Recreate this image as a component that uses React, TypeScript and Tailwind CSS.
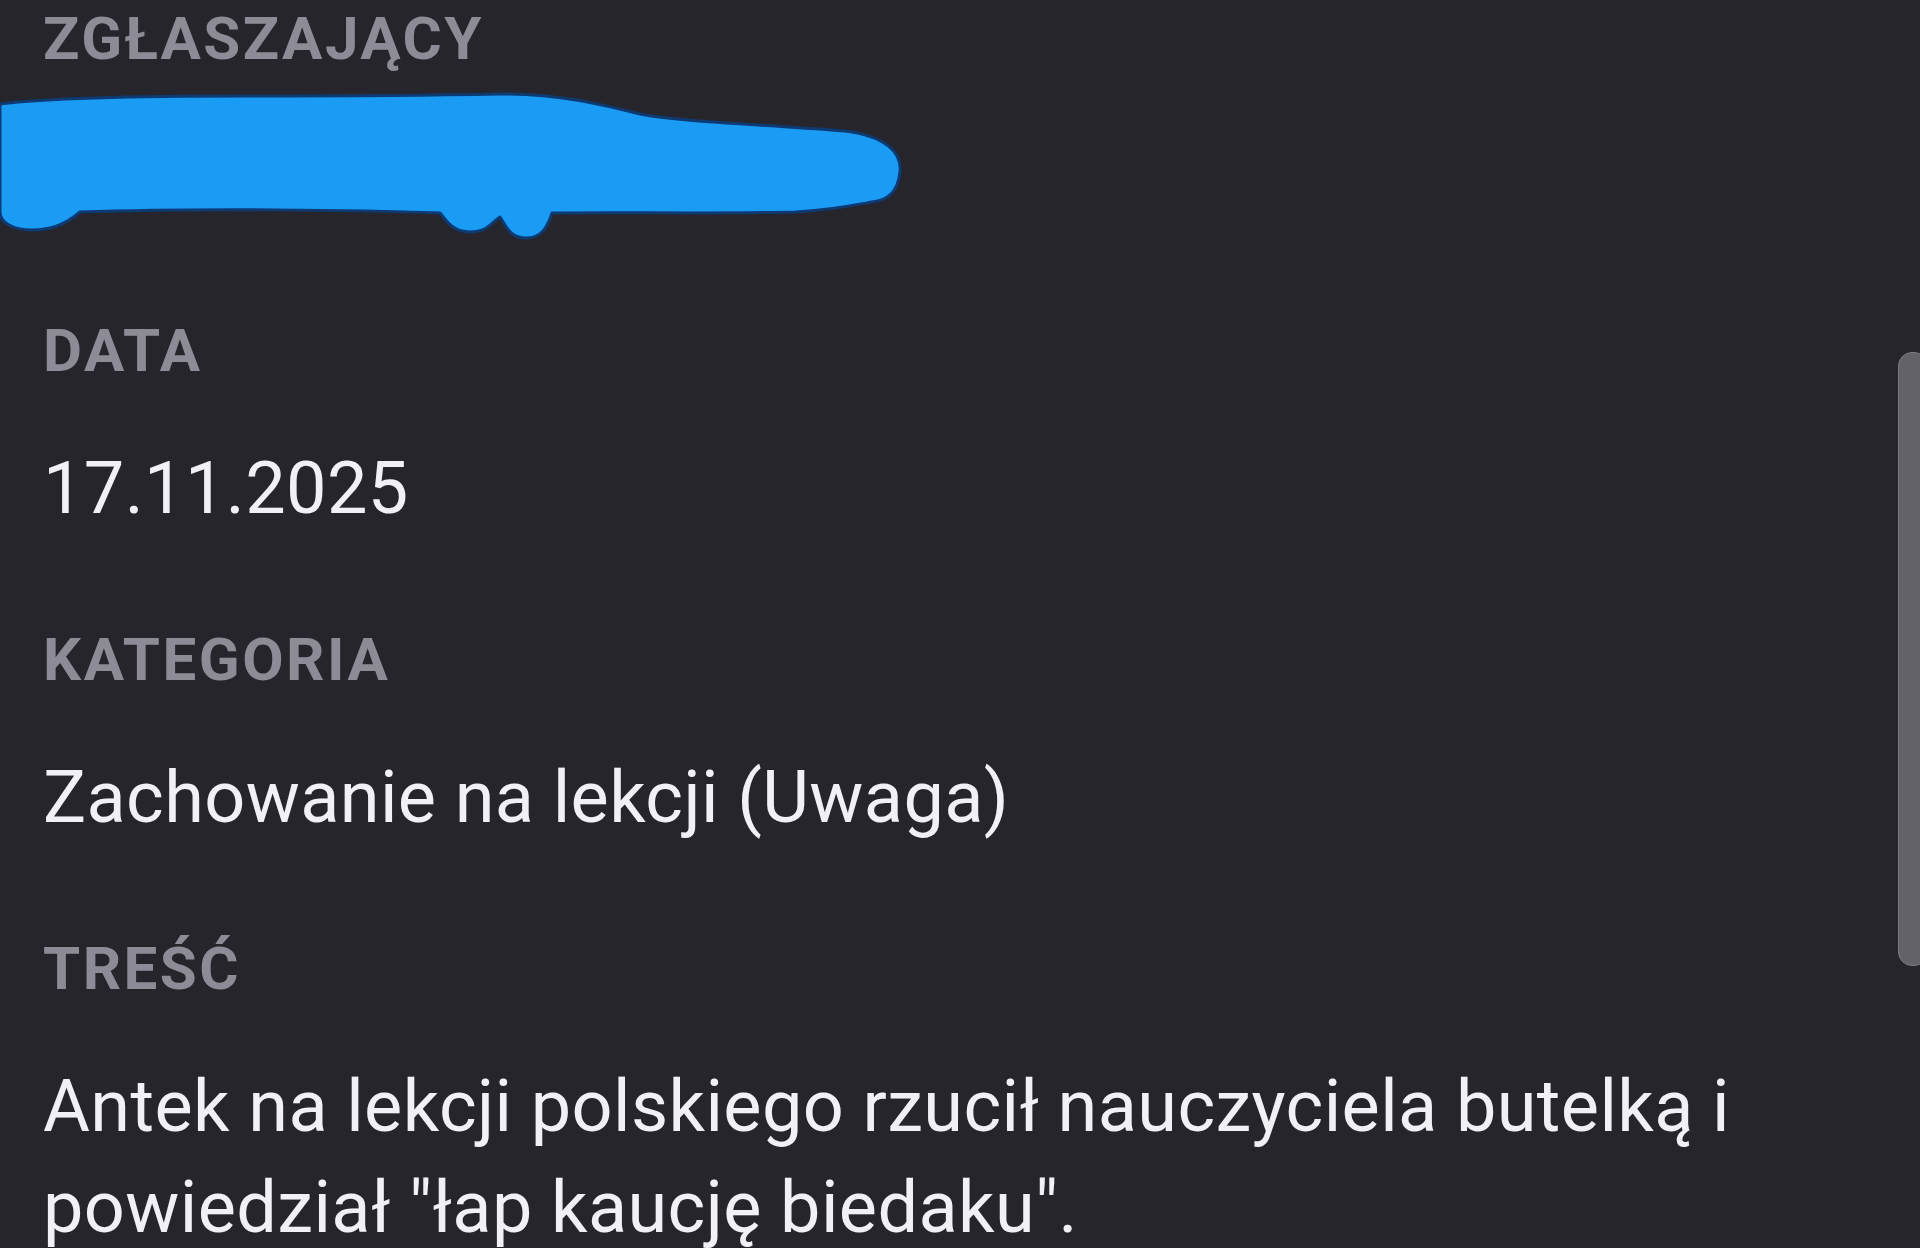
import type { ReactNode } from "react";

// ─── Redaction scribble over the reporter's name ─────────────────────────────
function Scribble() {
  return (
    <svg
      width="910"
      height="150"
      viewBox="0 91 910 150"
      className="block -ml-[43px]"
      aria-hidden
    >
      <path
        d="M0 104
           C 40 99, 120 96, 250 96
           C 360 96, 450 95, 500 94
           C 560 94, 600 104, 640 114
           C 680 122, 760 124, 845 131
           C 885 136, 902 152, 900 172
           C 898 192, 888 200, 872 202
           C 850 206, 830 210, 796 212
           C 720 214, 620 212, 552 213
           C 548 226, 542 238, 526 238
           C 510 238, 506 226, 500 217
           C 492 222, 488 232, 470 232
           C 452 232, 446 220, 440 213
           C 360 210, 200 208, 80 212
           C 66 224, 52 230, 32 230
           C 12 230, 0 222, 0 212 Z"
        fill="#1b9cf4"
        stroke="#0d3a73"
        strokeWidth="3"
        strokeLinejoin="round"
      />
    </svg>
  );
}

function Label({ children, className = "" }: { children: ReactNode; className?: string }) {
  return (
    <div
      className={`text-[60px] leading-[70px] font-bold tracking-[2.5px] text-[#8d8b95] ${className}`}
    >
      {children}
    </div>
  );
}

function Value({ children, className = "" }: { children: ReactNode; className?: string }) {
  return (
    <div
      className={`mt-[52px] text-[72px] leading-[101px] tracking-[0.4px] text-[#f1f0f5] ${className}`}
    >
      {children}
    </div>
  );
}

export default function App() {
  return (
    <div
      className="relative w-[1920px] h-[1248px] overflow-hidden bg-[#26252c]"
      style={{ fontFamily: "Roboto, 'Noto Sans', sans-serif" }}
    >
      {/* ── Details ── */}
      <div className="flex flex-col pl-[43px] pr-[80px] pt-[4px]">
        <Label>ZGŁASZAJĄCY</Label>
        <div className="mt-[17px]">
          <Scribble />
        </div>

        <Label className="mt-[75px]">DATA</Label>
        <Value className="mt-[49px]">17.11.2025</Value>

        <Label className="mt-[86px]">KATEGORIA</Label>
        <Value>Zachowanie na lekcji (Uwaga)</Value>

        <Label className="mt-[86px]">TREŚĆ</Label>
        <Value>
          Antek na lekcji polskiego rzucił nauczyciela butelką i powiedział "łap kaucję biedaku".
        </Value>
      </div>

      {/* ── Scroll thumb ── */}
      <div className="absolute left-[1898px] top-[352px] w-[30px] h-[614px] rounded-[14px] bg-[#636269] border border-[#7c7b82]" />
    </div>
  );
}
